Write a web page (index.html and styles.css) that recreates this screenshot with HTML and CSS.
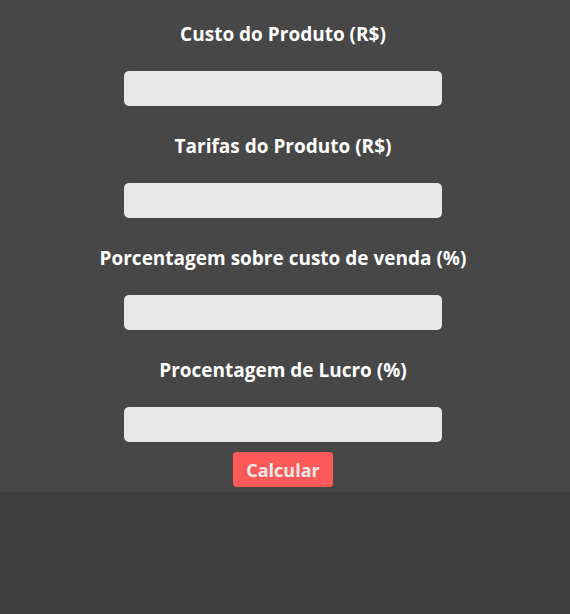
FILE: index.html
```html
<!DOCTYPE html>
<html lang="pt-BR">
<head>
<meta charset="utf-8">
<title>Calculadora</title>
<link rel="stylesheet" href="styles.css">
</head>
<body>
<main class="calc">
  <div class="field">
    <label class="label" for="custo">Custo do Produto (R$)</label>
    <input class="input" id="custo" type="text">
  </div>
  <div class="field">
    <label class="label" for="tarifas">Tarifas do Produto (R$)</label>
    <input class="input" id="tarifas" type="text">
  </div>
  <div class="field">
    <label class="label" for="porc">Porcentagem sobre custo de venda (%)</label>
    <input class="input" id="porc" type="text">
  </div>
  <div class="field">
    <label class="label" for="lucro">Procentagem de Lucro (%)</label>
    <input class="input" id="lucro" type="text">
  </div>
  <button class="btn" type="button">Calcular</button>
</main>
</body>
</html>
```
FILE: styles.css
```css
html, body {
  margin: 0;
  padding: 0;
  background: #3f3f3f;
  font-family: "Open Sans", "Noto Sans", sans-serif;
}
.calc {
  background: #474747;
  display: flex;
  flex-direction: column;
  align-items: center;
  padding: 0 4px 5px 0;
}
.field {
  display: flex;
  flex-direction: column;
  align-items: center;
  margin-top: 22px;
}
.field + .field {
  margin-top: 28px;
}
.label {
  color: #ffffff;
  font-weight: 700;
  font-size: 19px;
  line-height: 24px;
  height: 24px;
  margin-bottom: 25px;
  white-space: nowrap;
}
.input {
  box-sizing: border-box;
  width: 318px;
  height: 35px;
  border: none;
  border-radius: 5px;
  background: #e8e8e8;
  margin: 0;
  padding: 0 8px;
}
.btn {
  margin-top: 10px;
  width: 100px;
  height: 35px;
  border: none;
  border-radius: 4px;
  background: #ff5a5a;
  color: #e9e9e9;
  font-family: inherit;
  font-weight: 700;
  font-size: 18px;
  padding: 0;
}
```
